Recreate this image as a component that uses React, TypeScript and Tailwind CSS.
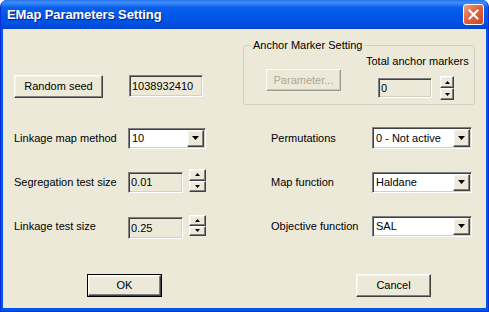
import type React from "react"

const font = { fontFamily: '"Liberation Sans", Arial, sans-serif' }

// sunken edit border (classic 3d)
const sunken =
  "border border-t-[#808080] border-l-[#808080] border-b-white border-r-white shadow-[inset_1px_1px_0_#404040,inset_-1px_-1px_0_#d4d0c8]"
const raised =
  "border border-t-white border-l-white border-b-[#404040] border-r-[#404040] shadow-[inset_-1px_-1px_0_#808080,inset_1px_1px_0_#f4f2ea]"

function Btn({ children, className = "", isDefault = false, disabled = false }: { children: React.ReactNode; className?: string; isDefault?: boolean; disabled?: boolean }) {
  const inner = (
    <div
      className={`h-full w-full flex items-center justify-center bg-[#ECE9D8] text-[11px] ${
        disabled
          ? "border border-t-white border-l-white border-b-[#9d9a8c] border-r-[#9d9a8c] shadow-[inset_-1px_-1px_0_#c9c6b8] text-[#ACA899]"
          : raised + " text-black"
      }`}
    >
      {children}
    </div>
  )
  if (isDefault) {
    return <div className={`border border-black ${className}`}>{inner}</div>
  }
  return <div className={className}>{inner}</div>
}

function Edit({ value, className = "", white = false }: { value: string; className?: string; white?: boolean }) {
  return (
    <div className={`${sunken} ${white ? "bg-white" : "bg-[#ECE9D8]"} flex items-center pl-[2px] text-[11px] text-black ${className}`}>
      {value}
    </div>
  )
}

function Arrow({ up = false, size = 7 }: { up?: boolean; size?: number }) {
  const h = Math.ceil(size / 2)
  return (
    <svg width={size} height={h} viewBox={`0 0 ${size} ${h}`}>
      <polygon points={up ? `0,${h} ${size},${h} ${size / 2},0` : `0,0 ${size},0 ${size / 2},${h}`} fill="#000" />
    </svg>
  )
}

function Spinner({ className = "" }: { className?: string }) {
  return (
    <div className={`flex flex-col ${className}`}>
      <div className={`${raised} bg-[#ECE9D8] flex-1 flex items-center justify-center`}>
        <Arrow up size={5} />
      </div>
      <div className={`${raised} bg-[#ECE9D8] flex-1 flex items-center justify-center`}>
        <Arrow size={5} />
      </div>
    </div>
  )
}

function Combo({ value, className = "" }: { value: string; className?: string }) {
  return (
    <div className={`${sunken} bg-white flex items-stretch text-[11px] text-black ${className}`}>
      <div className="flex-1 flex items-center pl-[3px]">{value}</div>
      <div className={`${raised} bg-[#ECE9D8] w-[17px] m-[1px] flex items-center justify-center`}>
        <Arrow size={7} />
      </div>
    </div>
  )
}

function Row({ left, leftCtl, right, rightCtl }: { left: string; leftCtl: React.ReactNode; right: string; rightCtl: React.ReactNode }) {
  return (
    <div className="h-[44px] flex items-center">
      <div className="w-[229px] flex items-center">
        <span className="w-[114px]">{left}</span>
        {leftCtl}
      </div>
      <div className="ml-[28px] flex items-center">
        <span className="w-[101px]">{right}</span>
        {rightCtl}
      </div>
    </div>
  )
}

export default function App() {
  return (
    <div
      className="w-[489px] h-[312px] flex flex-col bg-[#0055EA] rounded-t-[7px] border-x border-b border-[#0831D9] overflow-hidden"
      style={font}
    >
      {/* Title bar */}
      <div className="h-[29px] shrink-0 flex items-center pl-[6px] pr-[4px] bg-[linear-gradient(to_bottom,#2A74F0_0%,#3D8DFB_10%,#0A60EC_25%,#0056E8_55%,#0050E0_85%,#0044CC_100%)]">
        <span className="text-white font-bold text-[13px] tracking-[-0.1px] [text-shadow:1px_1px_0_#0a1e80]">
          EMap Parameters Setting
        </span>
        <div className="ml-auto w-[21px] h-[21px] rounded-[3px] border border-white bg-[linear-gradient(135deg,#F0A283_0%,#E2643E_45%,#C9441F_100%)] flex items-center justify-center">
          <svg width="11" height="11" viewBox="0 0 11 11">
            <path d="M1.5 1.5 L9.5 9.5 M9.5 1.5 L1.5 9.5" stroke="#fff" strokeWidth="2" strokeLinecap="square" />
          </svg>
        </div>
      </div>

      {/* Client area */}
      <div className="flex-1 mx-[2px] mb-[3px] bg-[#ECE9D8] pl-[11px] text-[11px] text-black">
        {/* Seed + anchor group */}
        <div className="flex pt-[10px]">
          <div className="w-[229px] pt-[36px] flex items-start">
            <Btn className="w-[89px] h-[23px]">Random seed</Btn>
            <Edit value="1038932410" className="ml-[26px] w-[74px] h-[22px]" />
          </div>
          <fieldset className="w-[232px] h-[66px] border border-[#D0D0BF] rounded-[3px]">
            <legend className="ml-[7px] px-[2px] leading-[13px]">Anchor Marker Setting</legend>
            <div className="flex">
              <Btn disabled className="ml-[22px] mt-[17px] w-[75px] h-[22px]">Parameter...</Btn>
              <div className="ml-[25px] flex flex-col">
                <span className="mt-[3px] leading-[13px]">Total anchor markers</span>
                <div className="mt-[8px] ml-[12px] flex items-center">
                  <Edit value="0" className="w-[54px] h-[20px]" />
                  <Spinner className="ml-[8px] w-[14px] h-[24px]" />
                </div>
              </div>
            </div>
          </fieldset>
        </div>

        {/* Parameter rows */}
        <div className="mt-[11px]">
          <Row
            left="Linkage map method"
            leftCtl={<Combo value="10" className="w-[78px] h-[21px]" />}
            right="Permutations"
            rightCtl={<Combo value="0 - Not active" className="w-[100px] h-[22px]" />}
          />
          <Row
            left="Segregation test size"
            leftCtl={
              <div className="flex items-center">
                <Edit value="0.01" className="w-[55px] h-[21px]" />
                <Spinner className="ml-[6px] w-[17px] h-[23px] -mt-[3px]" />
              </div>
            }
            right="Map function"
            rightCtl={<Combo value="Haldane" className="w-[100px] h-[21px]" />}
          />
          <Row
            left="Linkage test size"
            leftCtl={
              <div className="flex items-center mt-[4px]">
                <Edit value="0.25" className="w-[55px] h-[22px]" />
                <Spinner className="ml-[6px] w-[17px] h-[21px] -mt-[5px]" />
              </div>
            }
            right="Objective function"
            rightCtl={<Combo value="SAL" className="w-[100px] h-[21px]" />}
          />
        </div>

        {/* OK / Cancel */}
        <div className="mt-[26px] flex">
          <Btn isDefault className="ml-[73px] w-[75px] h-[23px]">OK</Btn>
          <Btn className="ml-[194px] w-[75px] h-[23px]">Cancel</Btn>
        </div>
      </div>
    </div>
  )
}
